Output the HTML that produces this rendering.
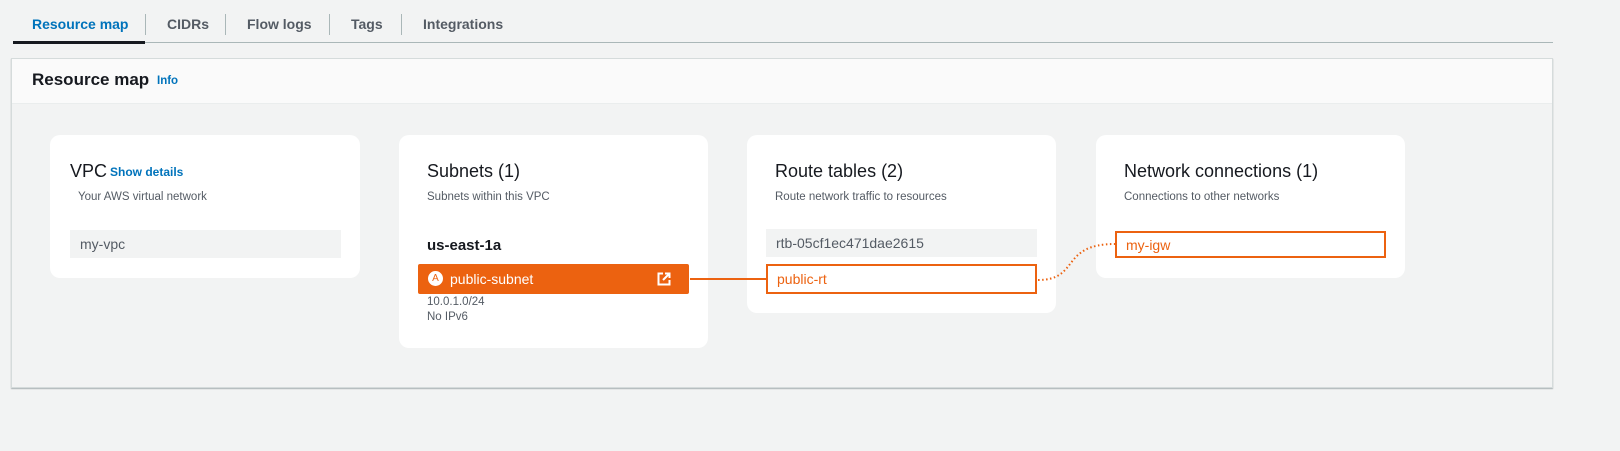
<!DOCTYPE html>
<html><head><style>
*{box-sizing:border-box;margin:0;padding:0}
body{width:1620px;height:451px;background:#f2f3f3;font-family:"Liberation Sans",sans-serif;position:relative;overflow:hidden;color:#16191f}
.tab{position:absolute;top:16px;font-size:14px;font-weight:bold;color:#545b64}
.sep{position:absolute;top:14px;width:1px;height:21px;background:#aab7b8}
.card{position:absolute;background:#fff;border-radius:10px}
.t{position:absolute;font-size:18px;color:#16191f}
.s{position:absolute;font-size:11.5px;color:#545b64}
.box{position:absolute;height:28px;font-size:14px;padding:6px 10px}
</style></head><body>
<div class="tab" style="left:32px;color:#0073bb">Resource map</div>
<div class="sep" style="left:145px"></div>
<div class="tab" style="left:167px">CIDRs</div>
<div class="sep" style="left:225px"></div>
<div class="tab" style="left:247px">Flow logs</div>
<div class="sep" style="left:329px"></div>
<div class="tab" style="left:351px">Tags</div>
<div class="sep" style="left:401px"></div>
<div class="tab" style="left:423px">Integrations</div>
<div style="position:absolute;left:13px;top:42px;width:1540px;height:1px;background:#aab7b8"></div>
<div style="position:absolute;left:13px;top:41px;width:132px;height:3px;background:#16191f"></div>

<div style="position:absolute;left:11px;top:58px;width:1542px;height:330px;border:1px solid #d5dbdb;box-shadow:0 1px 1px rgba(0,28,36,.3);background:#f2f3f3">
 <div style="height:45px;background:#fafafa;border-bottom:1px solid #eaeded"></div>
</div>
<div style="position:absolute;left:32px;top:70px;font-size:17px;font-weight:bold">Resource map</div>
<div style="position:absolute;left:157px;top:75px;font-size:11.5px;font-weight:bold;color:#0073bb">Info</div>

<div class="card" style="left:50px;top:135px;width:310px;height:143px">
 <div class="t" style="left:20px;top:26px">VPC</div>
 <div style="position:absolute;left:60px;top:30px;font-size:12px;font-weight:bold;color:#0073bb">Show details</div>
 <div class="s" style="left:28px;top:56px">Your AWS virtual network</div>
 <div class="box" style="left:20px;top:95px;width:271px;background:#f2f3f3;color:#545b64">my-vpc</div>
</div>

<div class="card" style="left:399px;top:135px;width:309px;height:213px">
 <div class="t" style="left:28px;top:26px">Subnets (1)</div>
 <div class="s" style="left:28px;top:56px">Subnets within this VPC</div>
 <div style="position:absolute;left:28px;top:102px;font-size:15px;font-weight:bold">us-east-1a</div>
 <div style="position:absolute;left:19px;top:129px;width:271px;height:30px;background:#ec6210;border-radius:2px;color:#fff;font-size:14px">
  <div style="position:absolute;left:10px;top:7px;width:15px;height:15px;border-radius:50%;background:#fff;color:#ec6210;font-size:10px;text-align:center;line-height:15px">A</div>
  <div style="position:absolute;left:32px;top:7px">public-subnet</div>
  <svg style="position:absolute;left:239px;top:8px" width="14" height="14" viewBox="0 0 14 14"><path d="M6 1.5H1.5v11h11V8M8 1.5h4.5V6M12.5 1.5L6 8" fill="none" stroke="#fff" stroke-width="2"/></svg>
 </div>
 <div class="s" style="left:28px;top:161px">10.0.1.0/24</div>
 <div class="s" style="left:28px;top:176px">No IPv6</div>
</div>

<div class="card" style="left:747px;top:135px;width:309px;height:178px">
 <div class="t" style="left:28px;top:26px">Route tables (2)</div>
 <div class="s" style="left:28px;top:56px">Route network traffic to resources</div>
 <div class="box" style="left:19px;top:94px;width:271px;background:#f2f3f3;color:#545b64">rtb-05cf1ec471dae2615</div>
 <div class="box" style="left:19px;top:129px;width:271px;height:30px;border:2px solid #ec6210;color:#ec6210;padding:5px 9px">public-rt</div>
</div>

<div class="card" style="left:1096px;top:135px;width:309px;height:143px">
 <div class="t" style="left:28px;top:26px">Network connections (1)</div>
 <div class="s" style="left:28px;top:56px">Connections to other networks</div>
 <div class="box" style="left:19px;top:96px;width:271px;height:27px;border:2px solid #ec6210;color:#ec6210;padding:4px 9px">my-igw</div>
</div>

<svg style="position:absolute;left:0;top:0" width="1620" height="451">
 <line x1="690" y1="279" x2="767" y2="279" stroke="#ec6210" stroke-width="2"/>
 <path d="M1038 280 C1080 280 1060 244 1115 244" fill="none" stroke="#ec6210" stroke-width="2" stroke-dasharray="1.5 2.5"/>
</svg>
</body></html>
